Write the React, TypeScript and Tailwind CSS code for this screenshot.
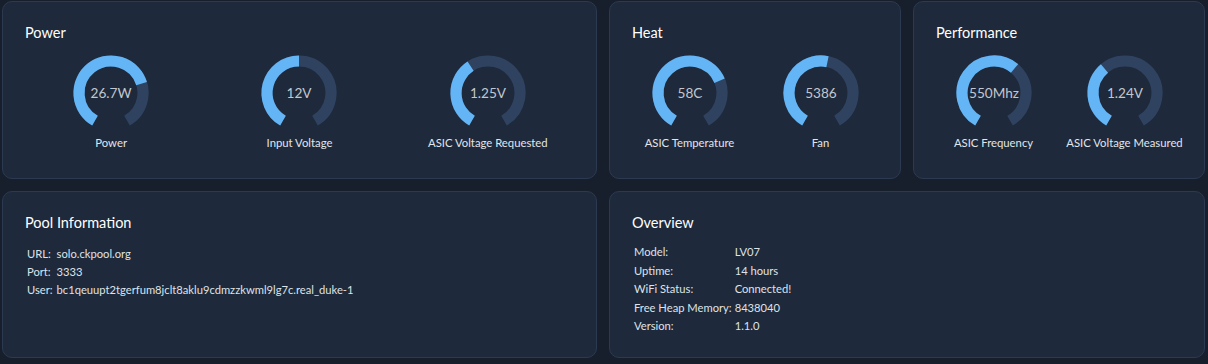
import React from "react";

const FONT = { fontFamily: "Lato, 'Noto Sans', sans-serif" };

// arc helper, knob style: 300° sweep, gap at the bottom
const R = 40;
const MIN_A = (4 * Math.PI) / 3;
const MAX_A = -Math.PI / 3;

function point(a: number) {
  return { x: 50 + Math.cos(a) * R, y: 50 - Math.sin(a) * R };
}

function arc(from: number, to: number) {
  const p1 = point(from);
  const p2 = point(to);
  const large = Math.abs(from - to) > Math.PI ? 1 : 0;
  return `M ${p1.x} ${p1.y} A ${R} ${R} 0 ${large} 1 ${p2.x} ${p2.y}`;
}

interface GaugeProps {
  value: string;
  label: string;
  fraction: number;
}

function Gauge({ value, label, fraction }: GaugeProps) {
  const end = MIN_A + (MAX_A - MIN_A) * fraction;
  return (
    <div className="flex flex-col items-center">
      <svg width="80" height="80" viewBox="0 0 100 100">
        <path d={arc(MIN_A, MAX_A)} fill="none" stroke="#2f4361" strokeWidth="14" />
        <path d={arc(MIN_A, end)} fill="none" stroke="#64b5f6" strokeWidth="14" />
        <text
          x="50"
          y="56.5"
          textAnchor="middle"
          fill="#c2c7cf"
          fontSize="17"
          style={FONT}
        >
          {value}
        </text>
      </svg>
      <div className="mt-[1px] text-[11.3px] leading-[18px] text-[#e2e5ea] whitespace-nowrap">{label}</div>
    </div>
  );
}

function Card({ title, children, className = "" }: { title: string; children: React.ReactNode; className?: string }) {
  return (
    <div className={`rounded-[10px] border border-[#2b3a51] bg-[#1e293b] px-[22px] pt-[19px] ${className}`}>
      <h2 className="text-[14.5px] leading-[24px] text-white">{title}</h2>
      {children}
    </div>
  );
}

export default function App() {
  return (
    <div className="w-[1208px] h-[364px] bg-[#171f2c] pl-[2px] pr-[3px] pt-[1px]" style={FONT}>
      <div className="grid grid-cols-[595px_292px_292px] gap-x-[12px] gap-y-[12px]">
        {/* Power */}
        <Card title="Power" className="h-[178px]">
          <div className="mx-[-8px] mt-[8px] grid grid-cols-3">
            <Gauge value="26.7W" label="Power" fraction={0.743} />
            <Gauge value="12V" label="Input Voltage" fraction={0.5} />
            <Gauge value="1.25V" label="ASIC Voltage Requested" fraction={0.39} />
          </div>
        </Card>

        {/* Heat */}
        <Card title="Heat" className="h-[178px]">
          <div className="mx-[-8px] mt-[8px] grid grid-cols-2">
            <Gauge value="58C" label="ASIC Temperature" fraction={0.725} />
            <Gauge value="5386" label="Fan" fraction={0.539} />
          </div>
        </Card>

        {/* Performance */}
        <Card title="Performance" className="h-[178px]">
          <div className="mx-[-8px] mt-[8px] grid grid-cols-2">
            <Gauge value="550Mhz" label="ASIC Frequency" fraction={0.633} />
            <Gauge value="1.24V" label="ASIC Voltage Measured" fraction={0.367} />
          </div>
        </Card>
      </div>

      <div className="mt-[12px] grid grid-cols-[595px_596px] gap-x-[12px]">
        {/* Pool */}
        <Card title="Pool Information" className="h-[167px]">
          <div className="mt-[10px] ml-[2px] grid grid-cols-[auto_1fr] gap-x-[4px] text-[11.2px] leading-[18px] text-[#dfe3e8]">
            <div>URL:</div>
            <div>solo.ckpool.org</div>
            <div>Port:</div>
            <div>3333</div>
            <div>User:</div>
            <div>bc1qeuupt2tgerfum8jclt8aklu9cdmzzkwml9lg7c.real_duke-1</div>
          </div>
        </Card>

        {/* Overview */}
        <Card title="Overview" className="h-[167px]">
          <div className="mt-[8px] ml-[2px] grid grid-cols-[auto_1fr] gap-x-[3px] text-[11.2px] leading-[18.5px] text-[#dfe3e8]">
            <div>Model:</div>
            <div>LV07</div>
            <div>Uptime:</div>
            <div>14 hours</div>
            <div>WiFi Status:</div>
            <div>Connected!</div>
            <div>Free Heap Memory:</div>
            <div>8438040</div>
            <div>Version:</div>
            <div>1.1.0</div>
          </div>
        </Card>
      </div>
    </div>
  );
}
